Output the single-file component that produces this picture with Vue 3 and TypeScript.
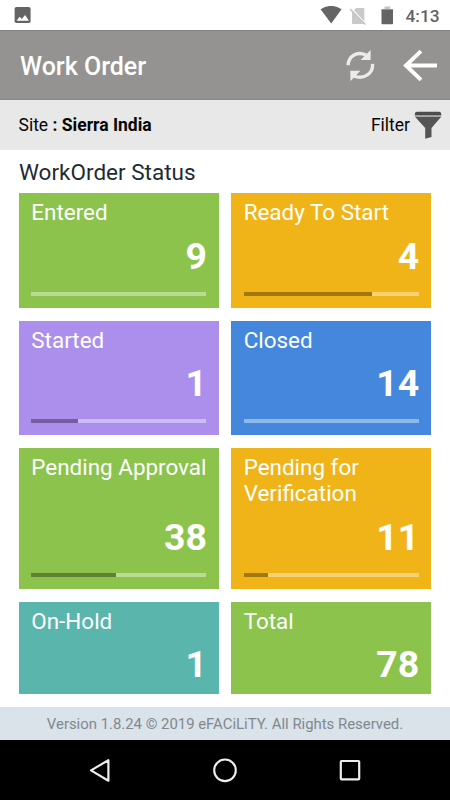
<script setup lang="ts">
interface Tile {
  label: string
  count: number
  tone: string
  progress?: number
}

const tiles: Tile[] = [
  { label: 'Entered', count: 9, tone: 'green', progress: 0 },
  { label: 'Ready To Start', count: 4, tone: 'amber', progress: 73.2 },
  { label: 'Started', count: 1, tone: 'purple', progress: 26.8 },
  { label: 'Closed', count: 14, tone: 'blue', progress: 0 },
  { label: 'Pending Approval', count: 38, tone: 'green', progress: 48.5 },
  { label: 'Pending for Verification', count: 11, tone: 'amber', progress: 13.8 },
  { label: 'On-Hold', count: 1, tone: 'teal' },
  { label: 'Total', count: 78, tone: 'green' },
]
</script>

<template>
  <div class="screen">
    <div class="statusbar">
      <svg class="picture" width="18" height="18" viewBox="0 0 18 18">
        <rect x="0.6" y="1" width="16" height="16" rx="1.8" fill="#646464" />
        <path d="M2.6 14.7 5.7 10.8l2.1 2.3 3.3-4.2 3.8 5.8z" fill="#fff" />
      </svg>
      <svg width="22" height="18" viewBox="0 0 22 18">
        <path d="M0.6 3.2Q11-3.4 21.6 3.2L11.2 17.6z" fill="#656565" />
      </svg>
      <svg class="sim" width="18" height="18" viewBox="0 0 18 18">
        <path d="M6 1h8.3v16H2V5z" fill="#c9c9c9" />
        <path d="M1 1.5 16 18" stroke="#fff" stroke-width="2.2" />
        <path d="M0 2 15.3 17.5" stroke="#c0c0c0" stroke-width="1.5" />
      </svg>
      <svg class="battery" width="13" height="19" viewBox="0 0 13 19">
        <path d="M3.5 0.5h5.7V3H12v2H0.5V3h3z" fill="#c4c4c4" />
        <path d="M0.5 3.5H12v14a.8.8 0 0 1-.8.8H1.3a.8.8 0 0 1-.8-.8z" fill="#646464" />
      </svg>
      <span class="clock">4:13</span>
    </div>

    <header class="appbar">
      <h1>Work Order</h1>
      <svg class="refresh" width="32" height="34" viewBox="0 0 32 34">
        <g fill="none" stroke="#ebebeb" stroke-width="3.4">
          <path d="M4.2 16.2C4.2 7.2 13 1.9 21.8 5.9" />
          <path d="M28.6 14.8C29.2 24.8 19.4 31 9.9 27" />
        </g>
        <path d="M26.6 1V10.9H16.6L20 7.5z" fill="#ebebeb" />
        <path d="M6.3 21.8h10L12.8 25.4 6.4 32.2z" fill="#ebebeb" />
      </svg>
      <svg class="back" width="36" height="34" viewBox="0 0 36 34">
        <path d="M35 16.5H3M19 2.1 4 16.5l15 14.4" fill="none" stroke="#fff" stroke-width="4" />
      </svg>
    </header>

    <div class="sitebar">
      <div class="site">Site <b>: Sierra India</b></div>
      <div class="filter">
        <span>Filter</span>
        <svg width="28" height="28" viewBox="0 0 28 28">
          <path d="M.8 3.8Q.8.7 3 .7H25Q27.3.7 27.3 3.8V4.6H.8z" fill="#4d4d4d" />
          <path d="M1.2 6H27L17.5 17v9L11.2 27.8V17z" fill="#555" />
          <path d="M1 5.3H27.2" stroke="#a5a5a5" stroke-width="1.3" />
        </svg>
      </div>
    </div>

    <main>
      <h2>WorkOrder Status</h2>
      <div class="grid">
        <section v-for="tile in tiles" :key="tile.label" class="tile" :class="[tile.tone, { plain: tile.progress === undefined }]">
          <div class="label">{{ tile.label }}</div>
          <div class="count">{{ tile.count }}</div>
          <div v-if="tile.progress !== undefined" class="track">
            <div class="fill" :style="{ width: tile.progress + '%' }"></div>
          </div>
        </section>
      </div>
    </main>

    <footer>Version 1.8.24 © 2019 eFACiLiTY. All Rights Reserved.</footer>

    <nav>
      <svg width="24" height="28" viewBox="0 0 24 28">
        <path d="M20.4 3.2V23.7L3 13.4z" fill="none" stroke="#eee" stroke-width="2.2" stroke-linejoin="round" />
      </svg>
      <svg width="28" height="28" viewBox="0 0 28 28">
        <circle cx="14" cy="13.3" r="10.8" fill="none" stroke="#eee" stroke-width="2.1" />
      </svg>
      <svg width="24" height="28" viewBox="0 0 24 28">
        <rect x="2.8" y="4" width="18.4" height="18.4" rx=".8" fill="none" stroke="#eee" stroke-width="2.2" />
      </svg>
    </nav>
  </div>
</template>

<style>
body {
  margin: 0;
  background: #fff;
}
</style>

<style scoped>
.screen {
  width: 450px;
  height: 800px;
  display: flex;
  flex-direction: column;
  overflow: hidden;
  background: #fff;
  font-family: Roboto, "Liberation Sans", sans-serif;
}

svg {
  display: block;
  flex: none;
}

.statusbar {
  height: 30px;
  flex: none;
  box-sizing: border-box;
  display: flex;
  align-items: flex-start;
  padding: 6px 0 0 14px;
}

.picture {
  margin-right: 288px;
}

.sim {
  margin-left: 8px;
  margin-top: 0.5px;
}

.battery {
  margin-left: 13px;
  margin-top: -0.5px;
}

.clock {
  margin-left: 11.5px;
  font-size: 17.3px;
  font-weight: 500;
  line-height: 20px;
  color: #626262;
}

.appbar {
  height: 70px;
  flex: none;
  box-sizing: border-box;
  display: flex;
  align-items: center;
  padding: 0 12px 0 20px;
  background: #959391;
  border-top: 1px solid #858381;
  border-bottom: 1px solid #8b8987;
}

h1 {
  margin: 4px 0 0;
  flex: 1;
  font-size: 25px;
  font-weight: 500;
  line-height: 30px;
  color: #fff;
}

.refresh {
  margin-top: 1px;
}

.back {
  margin-top: 1px;
  margin-left: 26px;
}

.sitebar {
  height: 50px;
  flex: none;
  box-sizing: border-box;
  display: flex;
  align-items: center;
  justify-content: space-between;
  padding: 0 8px 0 18.5px;
  background: #e8e8e8;
  color: #050505;
  font-size: 17.5px;
}

.filter {
  display: flex;
  align-items: center;
  gap: 4px;
}

main {
  flex: none;
  height: 557px;
  box-sizing: border-box;
  padding: 9px 19px 0;
}

h2 {
  margin: 0;
  height: 34px;
  font-size: 22.5px;
  font-weight: 400;
  line-height: 27px;
  color: #1d2b33;
}

.grid {
  display: grid;
  grid-template-columns: 1fr 1fr;
  grid-template-rows: 115px 114.7px 141px 92px;
  gap: 12.7px;
}

.tile {
  box-sizing: border-box;
  display: flex;
  flex-direction: column;
  padding: 6px 12.3px 12px;
  color: #fff;
}

.tile.plain {
  padding-bottom: 7px;
}

.green {
  background: #8bc34d;
}

.amber {
  background: #f0b418;
}

.purple {
  background: #ac8eed;
}

.blue {
  background: #4487dd;
}

.teal {
  background: #5ab5ad;
}

.label {
  margin-right: -8px;
  font-size: 22.45px;
  line-height: 26.4px;
}

.count {
  margin-top: auto;
  margin-right: -0.5px;
  text-align: right;
  font-size: 37.4px;
  font-weight: 700;
  line-height: 44.5px;
}

.track {
  height: 4px;
  flex: none;
  margin-top: 14px;
  background: rgba(255, 255, 255, 0.4);
}

.fill {
  height: 100%;
}

.green .fill {
  background: #5d8233;
}

.amber .fill {
  background: #a0780f;
}

.purple .fill {
  background: #735f9e;
}

footer {
  height: 33px;
  flex: none;
  background: #dae2ea;
  color: #80898e;
  text-align: center;
  font-size: 14.9px;
  line-height: 34px;
}

nav {
  flex: 1;
  display: flex;
  align-items: center;
  justify-content: space-between;
  padding: 1px 88px 0;
  background: #000;
}
</style>
